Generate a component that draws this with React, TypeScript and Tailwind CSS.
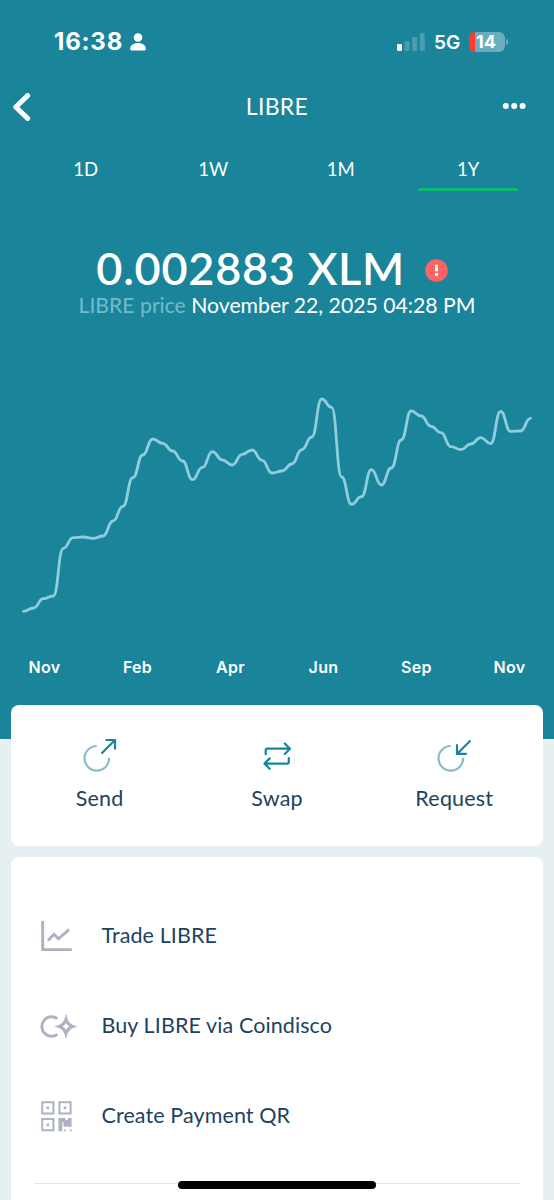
import React from "react";

const prices = [
  694, 684, 656, 648, 505, 473, 471, 475, 468, 423, 379, 293, 225, 177, 190, 213, 243, 299,
  262, 215, 240, 255, 223, 210, 241, 279, 273, 252, 209, 171, 57, 82, 291, 373, 350, 269,
  315, 264, 180, 93, 108, 139, 158, 200, 209, 192, 173, 191, 94, 154, 153, 115,
];

const points = prices.map((p, i) => [23.5 + i * 9.94, 30 + p / 3]);

const linePath = points
  .map(([x, y], i) => {
    if (i === 0) return `M${x} ${y}`;
    const [px, py] = points[i - 1];
    const mid = (px + x) / 2;
    return `C${mid} ${py} ${mid} ${y} ${x} ${y}`;
  })
  .join(" ");

function StatusBar() {
  return (
    <div className="flex h-[83px] items-center pl-[54px] pr-[46px] text-white">
      <span className="w-[70px] whitespace-nowrap font-['Inter'] text-[24px] font-bold leading-none tracking-[0.8px]">16:38</span>
      <svg className="ml-[5.5px]" width="16" height="18" viewBox="0 0 16 18" fill="currentColor">
        <circle cx="8" cy="4.5" r="4.3" />
        <path d="M0.1 16C0.1 12.4 3.2 10 8 10S15.9 12.4 15.9 16Q15.9 17.4 14.6 17.4H1.4Q0.1 17.4 0.1 16Z" />
      </svg>
      <div className="grow" />
      <svg width="28" height="18" viewBox="0 0 28 18" fill="currentColor">
        <rect x="0" y="10.9" width="5" height="7.1" rx="1.3" />
        <g opacity="0.2">
          <rect x="7.6" y="7.9" width="5" height="10.1" rx="1.3" />
          <rect x="15.2" y="4" width="5" height="14" rx="1.3" />
          <rect x="22.8" y="0" width="5" height="18" rx="1.3" />
        </g>
      </svg>
      <span className="ml-[9px] mt-px w-[27px] whitespace-nowrap font-['Inter'] text-[19px] font-semibold leading-none">5G</span>
      <div className="ml-[8px] flex h-[20px] w-[36px] items-center overflow-hidden rounded-[6px] bg-gradient-to-r from-[#ff3b30] from-[16%] to-[#68aebc] to-[16%] pl-[7px]">
        <span className="font-['Inter'] text-[18px] font-bold leading-none">14</span>
      </div>
      <div className="ml-[1px] h-[6px] w-[2px] rounded-r-full bg-[#68aebc]" />
    </div>
  );
}

function Header() {
  return (
    <div className="grid h-[48px] grid-cols-3 items-center text-white">
      <svg className="ml-[13px]" width="18" height="28" viewBox="0 0 18 28" fill="none" stroke="currentColor" strokeWidth="5" strokeLinecap="round" strokeLinejoin="round">
        <path d="M14.6 2.6L2.8 14L14.6 25.4" />
      </svg>
      <div className="-mt-[2px] text-center text-[23px] leading-none tracking-[0.3px]">LIBRE</div>
      <svg className="mr-[28px] justify-self-end" width="24" height="8" viewBox="0 0 24 8" fill="currentColor">
        <circle cx="3.8" cy="3" r="3" />
        <circle cx="12.2" cy="3" r="3" />
        <circle cx="20.6" cy="3" r="3" />
      </svg>
    </div>
  );
}

function Tabs() {
  return (
    <div className="grid grid-cols-4 px-[22px] text-[18.5px] leading-none tracking-[0.1px] text-white">
      {["1D", "1W", "1M", "1Y"].map((label) => (
        <div key={label} className="flex h-[60px] flex-col items-center pt-[29px]">
          <span>{label}</span>
          {label === "1Y" && <div className="mt-[9.5px] h-[3px] w-[100px] rounded-full bg-[#0dbc72]" />}
        </div>
      ))}
    </div>
  );
}

function Price() {
  return (
    <div className="text-white">
      <div className="flex items-center justify-end pr-[106px] pt-[54px]">
        <span className="whitespace-nowrap text-[45px] font-semibold leading-[46px] tracking-[0.75px]">0.002883 XLM</span>
        <svg className="ml-[20px] mt-[4px]" width="23" height="23" viewBox="0 0 23 23">
          <circle cx="11.5" cy="11.5" r="11.3" fill="#fd6265" />
          <path d="M10 5.8H13V12.2H10ZM10 13.9H13V16.7H10Z" fill="white" />
        </svg>
      </div>
      <div className="mt-[2px] whitespace-nowrap text-center text-[21.2px] leading-[24px]">
        <span className="text-[#73bccb]">LIBRE price</span> November 22, 2025 04:28 PM
      </div>
    </div>
  );
}

function Action({ label, children }: { label: string; children: React.ReactNode }) {
  return (
    <div className="flex flex-1 flex-col items-center pt-[32px]">
      <svg width="36" height="36" viewBox="0 0 36 36" fill="none" stroke="#17869a" strokeWidth="2.2">
        {children}
      </svg>
      <span className="mt-[12px] text-[21.5px] leading-[26px] tracking-[0.2px]">{label}</span>
    </div>
  );
}

function MenuRow({ label, children }: { label: string; children: React.ReactNode }) {
  return (
    <div className="flex h-[90px] items-center pl-[27px]">
      <svg width="40" height="32" viewBox="0 0 40 32" fill="none" stroke="#acb2c1" strokeWidth="2.9">
        {children}
      </svg>
      <span className="ml-[23.5px] whitespace-nowrap text-[21.5px] leading-none tracking-[0.1px]">{label}</span>
    </div>
  );
}

export default function App() {
  return (
    <div className="relative h-[1200px] w-[554px] overflow-hidden bg-[#e6eff1] font-['Lato',sans-serif]">
      <div className="h-[739px] bg-[#1a859a]">
        <StatusBar />
        <Header />
        <Tabs />
        <Price />
        <svg className="mt-[33px] block" width="554" height="290" viewBox="0 0 554 290" fill="none">
          <path d={linePath} stroke="#90cddd" strokeWidth="2.8" strokeLinecap="round" strokeLinejoin="round" />
        </svg>
        <div className="-mx-[2px] mt-[17px] grid grid-cols-6 font-['Inter'] text-[16px] font-semibold leading-[20px] tracking-[0.3px] text-white">
          {["Nov", "Feb", "Apr", "Jun", "Sep", "Nov"].map((month, i) => (
            <span key={i} className="text-center">{month}</span>
          ))}
        </div>
      </div>
      <div className="relative mx-[11px] -mt-[34px] flex h-[141px] rounded-[8px] bg-white text-[#1d435f]">
        <Action label="Send">
          <path d="M14.8 9A12.3 12.3 0 1 0 27.1 20.8" stroke="#8cbdc7" />
          <path d="M19.5 16.5L33 3M23.5 3H33V12.5" />
        </Action>
        <Action label="Swap">
          <path
            strokeLinecap="round"
            strokeLinejoin="round"
            d="M6.7 17.3V13.3Q6.7 11.7 8.3 11.7H31M25.8 6.5L31 11.7L25.8 17M29.8 21V25Q29.8 26.6 28.2 26.6H5.5M10.7 21.4L5.5 26.6L10.7 31.8"
          />
        </Action>
        <Action label="Request">
          <path d="M14.8 9A12.3 12.3 0 1 0 27.1 20.8" stroke="#8cbdc7" />
          <path d="M34.5 3.5L21 17M21 7.3V16.8H30.8" />
        </Action>
      </div>
      <div className="mx-[11px] mt-[11px] h-[343px] rounded-t-[8px] bg-white pt-[34px] text-[#1d435f]">
        <MenuRow label="Trade LIBRE">
          <path d="M4.7 1V29.6H33.8M10 20.6L16 14.3L20.5 18.8L31 9.7" />
        </MenuRow>
        <MenuRow label="Buy LIBRE via Coindisco">
          <path d="M19.4 8.6A9.8 9.8 0 1 0 19.4 24.4" />
          <path
            d="M28 4.8C29.2 11.5 32 15 38.8 16.5C32 18 29.2 21.5 28 28.2C26.8 21.5 24 18 17.2 16.5C24 15 26.8 11.5 28 4.8ZM28 12.6Q26.6 15.2 24.2 16.5Q26.6 17.8 28 20.4Q29.4 17.8 31.8 16.5Q29.4 15.2 28 12.6Z"
            fill="#acb2c1"
            fillRule="evenodd"
            stroke="#acb2c1"
            strokeWidth="0.7"
            strokeLinejoin="round"
          />
        </MenuRow>
        <MenuRow label="Create Payment QR">
          <path strokeWidth="2" d="M4.2 2.2H15.4V13.4H4.2ZM21.4 2.2H32.6V13.4H21.4ZM4.2 19.1H15.4V30.3H4.2Z" />
          <path
            stroke="none"
            fill="#acb2c1"
            d="M8.5 6.5H11.1V9.1H8.5ZM25.7 6.5H28.3V9.1H25.7ZM8.5 23.4H11.1V26H8.5ZM20.4 18.1H27.5V20H29.8V18.1H33.6V26.8H25.5V22.3H24.3V31.3H20.4ZM26 29.5H27.8V31.3H26ZM31.8 29.5H33.6V31.3H31.8Z"
          />
        </MenuRow>
        <div className="mx-[23px] mt-[22px] h-px bg-[#e5e6ea]" />
      </div>
      <div className="absolute left-[178px] top-[1181px] h-[8px] w-[198px] rounded-full bg-black" />
    </div>
  );
}
